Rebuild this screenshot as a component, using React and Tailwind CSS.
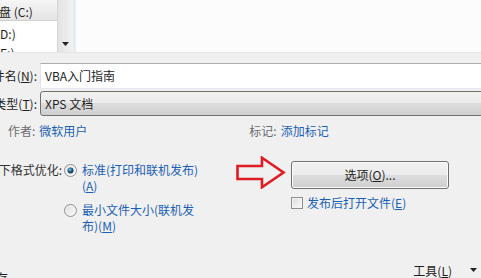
import React from "react";

function Radio({ checked }) {
  return (
    <svg width="13" height="13" viewBox="0 0 13 13" className="shrink-0">
      <defs>
        <linearGradient id="rg" x1="0" y1="0" x2="1" y2="1">
          <stop offset="0" stopColor="#d9d9d9" />
          <stop offset="1" stopColor="#ffffff" />
        </linearGradient>
        <radialGradient id="dot" cx="0.4" cy="0.35" r="0.7">
          <stop offset="0" stopColor="#8fc6e8" />
          <stop offset="0.5" stopColor="#1f5e8e" />
          <stop offset="1" stopColor="#0b2f4c" />
        </radialGradient>
      </defs>
      <circle cx="6.5" cy="6.5" r="6" fill="url(#rg)" stroke="#8e8f8f" strokeWidth="1" />
      <circle cx="6.5" cy="6.5" r="4.5" fill="none" stroke="#f4f4f4" strokeWidth="1" />
      {checked && <circle cx="6.5" cy="6.5" r="3" fill="url(#dot)" />}
    </svg>
  );
}

function Arrow() {
  return (
    <svg width="50" height="33" viewBox="0 0 50 33" className="shrink-0">
      <polygon
        points="1.5,10 26,10 26,1.8 47.5,16.5 26,31.2 26,23 1.5,23"
        fill="none"
        stroke="#e01b24"
        strokeWidth="2.6"
        strokeLinejoin="miter"
      />
    </svg>
  );
}

function Tri() {
  return (
    <svg width="7" height="4" viewBox="0 0 7 4">
      <polygon points="0,0 7,0 3.5,4" fill="#222" />
    </svg>
  );
}

export default function App() {
  return (
    <div className="w-[481px] h-[278px] overflow-hidden bg-[#f0f0f0] flex flex-col font-['Microsoft_YaHei','Noto_Sans_CJK_SC',sans-serif] text-[12px] text-[#1e1e1e]">
      {/* top browser area */}
      <div className="h-[53px] flex shrink-0 border-b border-[#e6e6e6]">
        <div className="w-[57px] bg-white flex flex-col overflow-hidden">
          <div className="h-[21px] shrink-0 bg-gradient-to-b from-[#f6f6f6] to-[#e4e4e4] border-b border-[#cfcfcf] flex items-center overflow-hidden">
            <span className="whitespace-nowrap ml-[-13px] leading-[16px] mt-[3px]">磁盘 (C:)</span>
          </div>
          <div className="h-[22px] shrink-0 flex items-center overflow-hidden">
            <span className="whitespace-nowrap ml-[-4px] leading-[16px] mt-[3px]">(D:)</span>
          </div>
          <div className="h-[16px] shrink-0 flex items-start overflow-hidden">
            <span className="whitespace-nowrap ml-[-4px] leading-[16px] mt-[2px]">(E:)</span>
          </div>
        </div>
        <div className="w-[16px] shrink-0 bg-gradient-to-r from-[#e3e3e3] to-[#f2f2f2] border-l border-[#d6d6d6] flex flex-col justify-end items-center pb-[6px]">
          <Tri />
        </div>
        <div className="w-[3px] shrink-0 bg-[#e4ecf4]" />
        <div className="flex-1 bg-[#fcfcfc]" />
      </div>

      {/* file name */}
      <div className="flex items-center mt-[10px] h-[26px] shrink-0">
        <div className="w-[37px] shrink-0 overflow-hidden flex justify-end">
          <span className="whitespace-nowrap leading-[16px]">
            文件名(<span className="underline">N</span>):
          </span>
        </div>
        <div className="ml-[3px] flex-1 mr-[-6px] h-[26px] bg-white border border-[#abadb3] border-b-[#e3e9ef] border-l-[#e2e3ea] flex items-center pl-[4px]">
          <span className="leading-[16px]">VBA入门指南</span>
        </div>
      </div>

      {/* type */}
      <div className="flex items-center mt-[2px] h-[25px] shrink-0">
        <div className="w-[37px] shrink-0 overflow-hidden flex justify-end">
          <span className="whitespace-nowrap leading-[16px]">
            保存类型(<span className="underline">T</span>):
          </span>
        </div>
        <div className="ml-[3px] flex-1 mr-[-6px] h-[25px] rounded-[3px] border border-[#707070] bg-[linear-gradient(#f2f2f2_0%,#ebebeb_50%,#dddddd_50%,#cfcfcf_100%)] flex items-center pl-[4px]">
          <span className="leading-[16px]">XPS 文档</span>
        </div>
      </div>

      {/* author / tags */}
      <div className="flex items-center mt-[7px] h-[16px] shrink-0 leading-[16px]">
        <span className="ml-[8px] text-[#6d6d6d] whitespace-nowrap">作者:</span>
        <span className="ml-[4px] text-[#1a5fb4] whitespace-nowrap">微软用户</span>
        <span className="ml-[162px] text-[#6d6d6d] whitespace-nowrap">标记:</span>
        <span className="ml-[4px] text-[#1a5fb4] whitespace-nowrap">添加标记</span>
      </div>

      {/* optimize */}
      <div className="flex mt-[17px] shrink-0">
        <div className="flex mt-[6px]">
          <div className="w-[62px] shrink-0 overflow-hidden flex justify-end">
            <span className="whitespace-nowrap leading-[16px] text-[#333]">以下格式优化:</span>
          </div>
          <div className="flex flex-col ml-[2px] gap-[8px]">
            <div className="flex items-start">
              <div className="mt-[2px]"><Radio checked /></div>
              <div className="ml-[5px] w-[118px] leading-[16px] text-[#1a5fb4]">
                标准(打印和联机发布)(<span className="underline">A</span>)
              </div>
            </div>
            <div className="flex items-start">
              <div className="mt-[2px]"><Radio /></div>
              <div className="ml-[5px] w-[118px] leading-[16px] text-[#1a5fb4]">
                最小文件大小(联机发布)(<span className="underline">M</span>)
              </div>
            </div>
          </div>
        </div>
        <div className="flex flex-col ml-[36px]">
          <div className="flex items-start">
            <Arrow />
            <button className="ml-[5px] mt-[5px] w-[158px] h-[28px] rounded-[3px] border border-[#707070] bg-[linear-gradient(#f2f2f2_0%,#ebebeb_50%,#dddddd_50%,#cfcfcf_100%)] shadow-[inset_0_0_0_1px_#fcfcfc] flex items-center justify-center leading-[16px] text-[#1e1e1e]">
              选项(<span className="underline">O</span>)...
            </button>
          </div>
          <div className="flex items-center ml-[55px] mt-[6px]">
            <div className="w-[12px] h-[12px] border border-[#8e8f8f] bg-gradient-to-br from-[#dcdcdc] to-[#fbfbfb] shadow-[inset_0_0_0_1px_#f4f4f4]" />
            <span className="ml-[4px] leading-[16px] text-[#1a5fb4] whitespace-nowrap">
              发布后打开文件(<span className="underline">E</span>)
            </span>
          </div>
        </div>
      </div>

      {/* bottom */}
      <div className="mt-auto flex items-start h-[16px] shrink-0">
        <div className="w-[8px] overflow-hidden flex justify-end mt-[8px]">
          <span className="whitespace-nowrap leading-[16px]">保存</span>
        </div>
        <span className="ml-auto leading-[16px] whitespace-nowrap mt-[1px]">
          工具(<span className="underline">L</span>)
        </span>
        <div className="ml-[18px] mr-[4px] mt-[6px]"><Tri /></div>
      </div>
    </div>
  );
}
